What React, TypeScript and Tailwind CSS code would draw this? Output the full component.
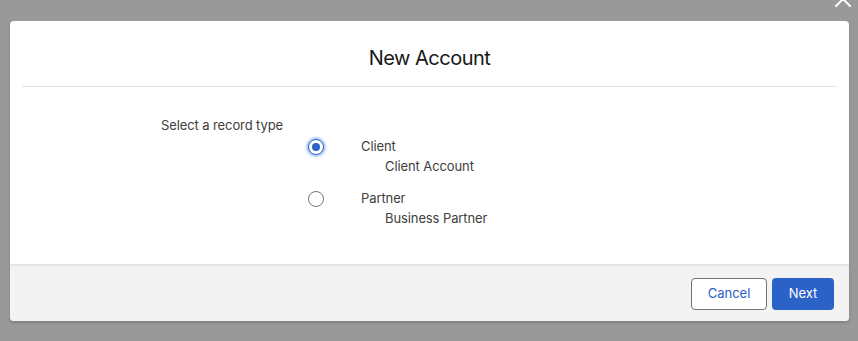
import React, { useState } from 'react';

const options = [
  { id: 'client', label: 'Client', description: 'Client Account' },
  { id: 'partner', label: 'Partner', description: 'Business Partner' },
];

function Radio({ checked }: { checked: boolean }) {
  return checked ? (
    <span className="mt-[3px] flex h-4 w-4 shrink-0 items-center justify-center rounded-full border border-[#2a62c8] bg-white shadow-[0_0_2px_2px_rgba(80,140,240,0.45)]">
      <span className="h-2 w-2 rounded-full bg-[#2a62c8]" />
    </span>
  ) : (
    <span className="mt-[3px] h-4 w-4 shrink-0 rounded-full border border-[#747474] bg-white" />
  );
}

export default function App() {
  const [selected, setSelected] = useState('client');

  return (
    <div
      className="relative h-[341px] w-[858px] overflow-hidden bg-[#999999] px-[10px] pt-[21px]"
      style={{ fontFamily: 'Inter, "Liberation Sans", Arial, sans-serif' }}
    >
      <svg
        className="absolute right-[6px] top-[-10px]"
        width="18"
        height="18"
        viewBox="0 0 18 18"
        fill="none"
        stroke="white"
        strokeWidth="2"
        strokeLinecap="round"
      >
        <path d="M2 2L16 16M16 2L2 16" />
      </svg>

      <div className="w-[839px] overflow-hidden rounded-[4px] bg-white shadow-[0_2px_3px_rgba(0,0,0,0.16)]">
        <div className="mx-[12px] flex h-[66px] items-center justify-center border-b border-[#e5e5e5] pt-[9px]">
          <h2 className="text-[20px] leading-[26px] tracking-[-0.5px] text-[#181818]">New Account</h2>
        </div>

        <div className="h-[177px] pl-[151px] pt-[29px] text-[13px] text-[#3e3e3c]">
          <p className="leading-[18px] tracking-[-0.1px]">Select a record type</p>
          <div className="ml-[147px] mt-[2px] flex flex-col gap-[12px]">
            {options.map((opt) => (
              <button
                key={opt.id}
                onClick={() => setSelected(opt.id)}
                className="flex items-start text-left"
              >
                <Radio checked={selected === opt.id} />
                <div className="ml-[37px] leading-[20px] tracking-[-0.1px]">
                  <div>{opt.label}</div>
                  <div className="pl-[24px]">{opt.description}</div>
                </div>
              </button>
            ))}
          </div>
        </div>

        <div className="flex h-[57px] items-center justify-end gap-[5px] border-t-2 border-[#e5e5e5] bg-[#f3f3f3] pr-[15px] text-[13px]">
          <button className="h-[32px] w-[76px] rounded-[4px] border border-[#747474] bg-white text-[#2a62c8]">
            Cancel
          </button>
          <button className="h-[32px] w-[62px] rounded-[4px] bg-[#2a62c8] text-white">
            Next
          </button>
        </div>
      </div>
    </div>
  );
}
